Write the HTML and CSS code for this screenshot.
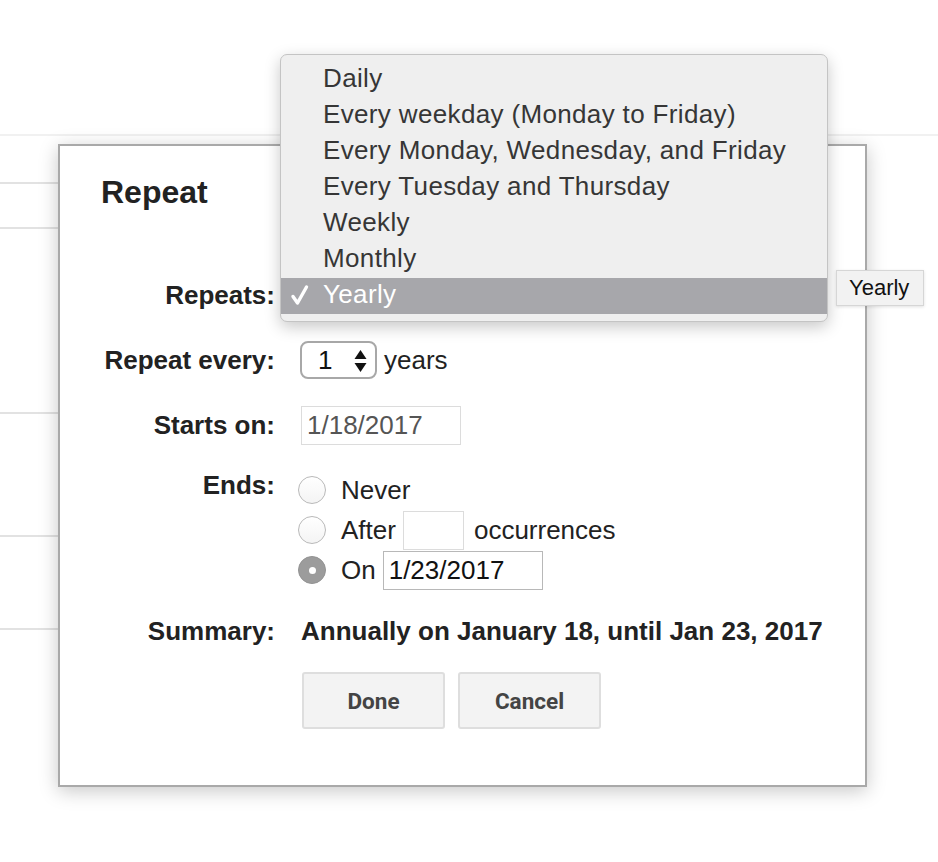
FILE: index.html
```html
<!DOCTYPE html>
<html>
<head>
<meta charset="utf-8">
<link rel="stylesheet" href="styles.css">
</head>
<body>
<div class="page">
  <div class="backdrop">
    <div class="topbar"></div>
    <div class="list">
      <div class="list-row r1"></div>
      <div class="list-row r2"></div>
      <div class="list-row r3"></div>
      <div class="list-row r4"></div>
      <div class="list-row r5"></div>
    </div>
  </div>

  <div class="dialog">
    <h1 class="title">Repeat</h1>
    <div class="form">
      <div class="label row40">Repeats:</div>
      <div class="value row40"></div>

      <div class="label row40">Repeat every:</div>
      <div class="value row40">
        <div class="spinner">
          <span class="spin-num">1</span>
          <svg class="spin-arrows" width="13" height="24" viewBox="0 0 13 24">
            <path d="M6.5 1 L12.5 10 L0.5 10 Z" fill="#111"/>
            <path d="M6.5 23 L12.5 14 L0.5 14 Z" fill="#111"/>
          </svg>
        </div>
        <span class="unit">years</span>
      </div>

      <div class="label row40">Starts on:</div>
      <div class="value row40">
        <div class="field start">1/18/2017</div>
      </div>

      <div class="label label-top">Ends:</div>
      <div class="value ends">
        <div class="end-row">
          <span class="radio"></span>
          <span class="opt">Never</span>
        </div>
        <div class="end-row">
          <span class="radio"></span>
          <span class="opt">After</span>
          <div class="field after"></div>
          <span class="opt">occurrences</span>
        </div>
        <div class="end-row">
          <span class="radio checked"></span>
          <span class="opt">On</span>
          <div class="field on">1/23/2017</div>
        </div>
      </div>

      <div class="label line30 sum-row">Summary:</div>
      <div class="value line30 summary sum-row">Annually on January 18, until Jan 23, 2017</div>

      <div class="label"></div>
      <div class="value buttons">
        <div class="btn">Done</div>
        <div class="btn">Cancel</div>
      </div>
    </div>
  </div>

  <div class="menu">
    <div class="menu-item">Daily</div>
    <div class="menu-item">Every weekday (Monday to Friday)</div>
    <div class="menu-item">Every Monday, Wednesday, and Friday</div>
    <div class="menu-item">Every Tuesday and Thursday</div>
    <div class="menu-item">Weekly</div>
    <div class="menu-item">Monthly</div>
    <div class="menu-item selected">
      <svg class="check" width="20" height="22" viewBox="0 0 20 22">
        <path d="M3 12.5 L7.5 19 L16.5 3" fill="none" stroke="#fff" stroke-width="3.4" stroke-linecap="round" stroke-linejoin="round"/>
      </svg>
      Yearly
    </div>
  </div>

  <div class="tooltip">Yearly</div>
</div>
</body>
</html>
```

FILE: styles.css
```css
* { box-sizing: border-box; }

html, body {
  margin: 0;
  padding: 0;
  background: #fff;
}

.page {
  position: relative;
  width: 938px;
  height: 862px;
  overflow: hidden;
  font-family: "Liberation Sans", Arial, Helvetica, sans-serif;
  color: #222;
}

/* background app content */
.topbar {
  height: 136px;
  border-bottom: 2px solid #f1f1f1;
}
.list {
  width: 620px;
}
.list-row {
  border-bottom: 2px solid #e2e2e2;
}
.r1 { height: 48px; }
.r2 { height: 45px; }
.r3 { height: 185px; }
.r4 { height: 123px; }
.r5 { height: 93px; }

/* dialog */
.dialog {
  position: absolute;
  left: 58px;
  top: 144px;
  width: 809px;
  height: 643px;
  background: #fff;
  border: 2px solid #a9a9a9;
  box-shadow: 0 4px 18px rgba(0, 0, 0, 0.22);
  padding-top: 27px;
}

.title {
  margin: 0;
  padding-left: 41px;
  font-size: 32px;
  line-height: 38px;
  font-weight: bold;
  color: #222;
}

.form {
  margin-top: 64px;
  display: grid;
  grid-template-columns: 215px 1fr;
  column-gap: 25px;
  row-gap: 25px;
  font-size: 26px;
}

.label {
  text-align: right;
  font-weight: bold;
  color: #222;
}

.row40 {
  height: 40px;
  line-height: 40px;
}
.line30 {
  line-height: 30px;
}
.label-top {
  line-height: 30px;
}
.sum-row {
  margin-top: 1px;
}

.value {
  display: flex;
  align-items: center;
}
.value.line30 { display: block; }

.spinner {
  width: 77px;
  height: 38px;
  border: 2px solid #a8a8a8;
  border-radius: 8px;
  display: flex;
  align-items: center;
  padding-left: 16px;
  padding-right: 8px;
  justify-content: space-between;
  line-height: 34px;
  color: #111;
}
.spin-arrows { display: block; margin-top: 1px; }

.unit {
  margin-left: 7px;
  color: #222;
}

.field {
  height: 39px;
  border: 1px solid #dcdcdc;
  line-height: 37px;
  padding-left: 5px;
  background: #fff;
}
.field.start {
  width: 160px;
  margin-left: 1px;
  color: #555;
}
.field.after {
  width: 61px;
  margin-left: 7px;
  margin-right: 10px;
}
.field.on {
  width: 160px;
  margin-left: 7px;
  border-color: #b8b8b8;
  color: #111;
}

.ends {
  flex-direction: column;
  align-items: stretch;
  gap: 0;
}
.end-row {
  height: 40px;
  display: flex;
  align-items: center;
}
.radio {
  width: 28px;
  height: 28px;
  margin-left: -2px;
  margin-right: 15px;
  border-radius: 50%;
  border: 1px solid #b9b9b9;
  background: linear-gradient(#fff, #f4f4f4);
  position: relative;
  flex: none;
}
.radio.checked {
  background: #9c9c9c;
  border-color: #939393;
}
.radio.checked::after {
  content: "";
  position: absolute;
  left: 50%;
  top: 50%;
  width: 7px;
  height: 7px;
  margin: -3.5px 0 0 -3.5px;
  border-radius: 50%;
  background: #fff;
}
.opt { color: #222; }

.summary {
  font-weight: bold;
  padding-left: 1px;
  color: #222;
}

.buttons {
  margin-top: 1px;
  gap: 13px;
  padding-left: 2px;
}
.btn {
  width: 143px;
  height: 57px;
  border: 2px solid #dedede;
  border-radius: 3px;
  background: #f3f3f3;
  font-family: Roboto, "Liberation Sans", Arial, sans-serif;
  font-weight: bold;
  font-size: 22.5px;
  color: #444;
  display: flex;
  align-items: center;
  justify-content: center;
}

/* native popup menu */
.menu {
  position: absolute;
  left: 280px;
  top: 54px;
  width: 548px;
  height: 268px;
  padding: 7px 0 8px;
  background: #efefef;
  border: 1px solid #c4c4c4;
  border-radius: 7px;
  box-shadow: 0 5px 16px rgba(0, 0, 0, 0.22);
  font-family: "Liberation Sans", Helvetica, Arial, sans-serif;
  font-size: 26px;
  letter-spacing: 0.35px;
  color: #363636;
}
.menu-item {
  position: relative;
  height: 36px;
  line-height: 33px;
  padding-left: 42px;
  white-space: nowrap;
}
.menu-item.selected {
  background: #a7a7ab;
  color: #fff;
}
.check {
  position: absolute;
  left: 9px;
  top: 6px;
}

.tooltip {
  position: absolute;
  left: 836px;
  top: 270px;
  width: 88px;
  height: 36px;
  padding-left: 12px;
  line-height: 34px;
  font-family: "Liberation Sans", Helvetica, Arial, sans-serif;
  font-size: 22px;
  color: #111;
  background: #f2f2f2;
  border: 1px solid #d6d6d6;
  box-shadow: 0 1px 3px rgba(0, 0, 0, 0.12);
}
```
